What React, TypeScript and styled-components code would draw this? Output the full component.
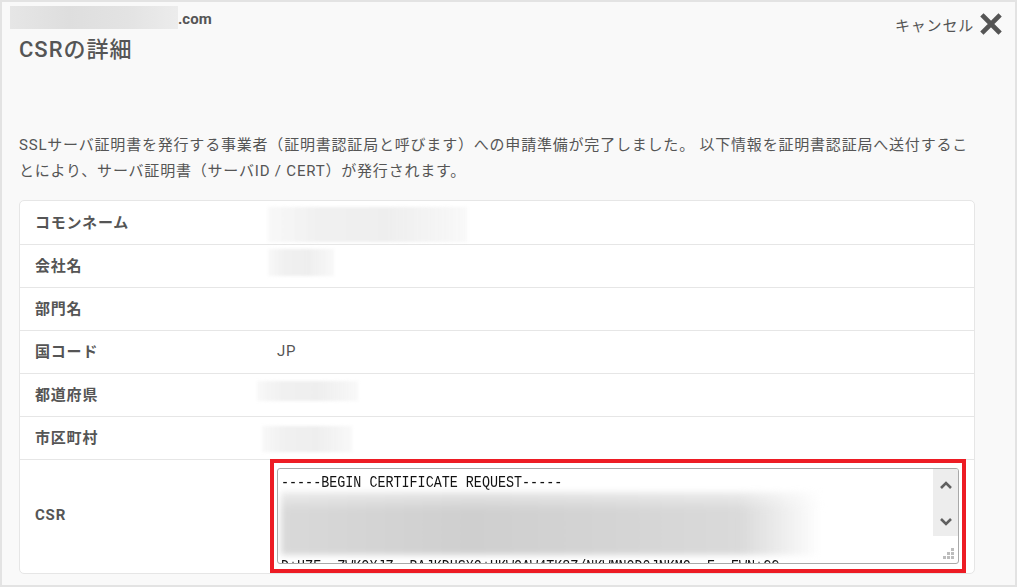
import React from "react";
import styled, { createGlobalStyle } from "styled-components";

const GlobalStyle = createGlobalStyle`
  body {
    margin: 0;
    background: #ffffff;
  }
`;

const Frame = styled.div`
  width: 1017px;
  height: 587px;
  box-sizing: border-box;
  border: 2px solid #e3e3e3;
  background: #f9f9f9;
  padding: 0 12px 0 17px;
  overflow: hidden;
  font-family: Roboto, "Noto Sans CJK JP", sans-serif;
  color: #555;
`;

const Header = styled.div`
  display: flex;
  justify-content: space-between;
  align-items: flex-start;
`;

const HeaderMain = styled.div`
  display: flex;
  flex-direction: column;
  padding-top: 4px;
`;

const DomainLine = styled.div`
  display: flex;
  align-items: flex-end;
  height: 23px;
  margin-left: -9px;
`;

const DomainMask = styled.div`
  width: 168px;
  height: 23px;
  background: linear-gradient(90deg, #e6e6e6, #dedede 35%, #e3e3e3 70%, #ececec);
`;

const DomainSuffix = styled.span`
  font-size: 15px;
  font-weight: 700;
  line-height: 19px;
`;

const Title = styled.h1`
  margin: 6px 0 0;
  font-size: 22px;
  font-weight: 500;
  line-height: 30px;
  letter-spacing: 1px;
  color: #555;
`;

const CancelButton = styled.button`
  display: flex;
  align-items: center;
  gap: 5px;
  margin-top: 10px;
  padding: 0;
  border: none;
  background: transparent;
  font-family: inherit;
  font-size: 15px;
  letter-spacing: 0.8px;
  color: #555;
  cursor: pointer;
`;

const Body = styled.div`
  margin-right: 28px;
`;

const Description = styled.p`
  margin: 67px 0 0;
  font-size: 15px;
  line-height: 26px;
  letter-spacing: 0.8px;
  white-space: nowrap;
`;

const Card = styled.div`
  margin-top: 16px;
  background: #fff;
  border: 1px solid #e6e6e6;
  border-radius: 5px;
`;

const Row = styled.div`
  display: grid;
  grid-template-columns: 250px 1fr;
  min-height: 42px;
  border-bottom: 1px solid #e6e6e6;

  &:last-child {
    border-bottom: none;
  }
`;

const Label = styled.div`
  display: flex;
  align-items: center;
  padding: 0 0 3px 15px;
  font-size: 15px;
  font-weight: 700;
  letter-spacing: 0.8px;
`;

const ValueCell = styled.div<{ $flush?: boolean }>`
  display: flex;
  align-items: ${({ $flush }) => ($flush ? "flex-start" : "center")};
  padding: 0 8px ${({ $flush }) => ($flush ? "0" : "2px")} 0;
  margin-top: ${({ $flush }) => ($flush ? "-1px" : "0")};
`;

const ValueText = styled.span`
  padding-left: 7px;
  font-size: 15px;
  letter-spacing: 0.6px;
`;

const Redacted = styled.div<{ $w: number; $h: number; $dx: number; $dy: number }>`
  align-self: flex-start;
  width: ${({ $w }) => $w}px;
  height: ${({ $h }) => $h}px;
  margin-left: ${({ $dx }) => $dx}px;
  margin-top: ${({ $dy }) => $dy}px;
  background: linear-gradient(90deg, rgba(238, 238, 238, 0.4), #f0f0f0 25%, #eeeeee 60%, rgba(244, 244, 244, 0.6));
  filter: blur(1.5px);
`;

const Highlight = styled.div`
  flex: 1;
  border: 4px solid #ed1c24;
  padding: 5px 3px;
`;

const CsrField = styled.div`
  position: relative;
  display: flex;
  height: 96px;
  box-sizing: border-box;
  border: 1px solid #a9a9a9;
  border-radius: 3px;
  background: #fff;
  overflow: hidden;
`;

const CsrText = styled.div`
  flex: 1;
  padding: 5px 0 0 3px;
  overflow: hidden;
  font-family: "Liberation Mono", monospace;
  font-size: 13.4px;
  line-height: 18px;
  color: #111;
  white-space: pre;
`;

const MonoLine = styled.div<{ $shift?: number }>`
  margin-top: ${({ $shift }) => $shift ?? 0}px;
  transform: scaleY(1.3);
  transform-origin: center;
`;

const CsrBlur = styled.div`
  width: 540px;
  height: 63px;
  background:
    linear-gradient(180deg, rgba(255, 255, 255, 0.5), rgba(255, 255, 255, 0) 30%),
    linear-gradient(90deg, #d9d9d9, #cfcfcf 35%, #d4d4d4 60%, #dadada 85%, rgba(255, 255, 255, 0));
  filter: blur(3px);
`;

const ScrollTrack = styled.div`
  display: flex;
  flex-direction: column;
  justify-content: space-between;
  align-items: center;
  width: 25px;
  height: 67px;
  box-sizing: border-box;
  padding: 11px 0 9px;
  background: #ededed;
`;

const Grip = styled.svg`
  position: absolute;
  right: 3px;
  bottom: 3px;
`;

const Chevron = ({ up }: { up?: boolean }) => (
  <svg width="14" height="10" viewBox="0 0 14 10">
    <path
      d={up ? "M2 8 L7 3 L12 8" : "M2 2 L7 7 L12 2"}
      fill="none"
      stroke="#606060"
      strokeWidth="2.6"
    />
  </svg>
);

const CloseIcon = () => (
  <svg width="24" height="24" viewBox="0 0 24 24">
    <path d="M4.5 4.5 L19.5 19.5 M19.5 4.5 L4.5 19.5" stroke="#555" strokeWidth="4.6" strokeLinecap="square" />
  </svg>
);

const rows = [
  { label: "コモンネーム", mask: { w: 199, h: 35, dx: -2, dy: 6 } },
  { label: "会社名", mask: { w: 66, h: 27, dx: -2, dy: 4 } },
  { label: "部門名" },
  { label: "国コード", value: "JP" },
  { label: "都道府県", mask: { w: 101, h: 20, dx: -13, dy: 7 } },
  { label: "市区町村", mask: { w: 90, h: 26, dx: -8, dy: 9 } },
];

const App: React.FC = () => {
  return (
    <>
      <GlobalStyle />
      <Frame>
        <Header>
          <HeaderMain>
            <DomainLine>
              <DomainMask />
              <DomainSuffix>.com</DomainSuffix>
            </DomainLine>
            <Title>CSRの詳細</Title>
          </HeaderMain>
          <CancelButton>
            キャンセル
            <CloseIcon />
          </CancelButton>
        </Header>
        <Body>
          <Description>
            SSLサーバ証明書を発行する事業者（証明書認証局と呼びます）への申請準備が完了しました。 以下情報を証明書認証局へ送付するこ
            <br />
            とにより、サーバ証明書（サーバID / CERT）が発行されます。
          </Description>
          <Card>
            {rows.map((r) => (
              <Row key={r.label}>
                <Label>{r.label}</Label>
                <ValueCell>
                  {r.value && <ValueText>{r.value}</ValueText>}
                  {r.mask && <Redacted $w={r.mask.w} $h={r.mask.h} $dx={r.mask.dx} $dy={r.mask.dy} />}
                </ValueCell>
              </Row>
            ))}
            <Row>
              <Label>CSR</Label>
              <ValueCell $flush>
                <Highlight>
                  <CsrField>
                    <CsrText>
                      <MonoLine>-----BEGIN CERTIFICATE REQUEST-----</MonoLine>
                      <CsrBlur />
                      <MonoLine $shift={3}>D+HZE  ZWKQXJZ  BAJKDHSXQ+UKWQAW4TK8Z/NKWMNOD0JNKMQ  E  EWN+CC</MonoLine>
                    </CsrText>
                    <ScrollTrack>
                      <Chevron up />
                      <Chevron />
                    </ScrollTrack>
                    <Grip width="12" height="12" viewBox="0 0 12 12">
                      <rect x="8" y="0" width="3" height="3" fill="#bdbdbd" />
                      <rect x="4" y="4" width="3" height="3" fill="#bdbdbd" />
                      <rect x="8" y="4" width="3" height="3" fill="#bdbdbd" />
                      <rect x="0" y="8" width="3" height="3" fill="#bdbdbd" />
                      <rect x="4" y="8" width="3" height="3" fill="#bdbdbd" />
                      <rect x="8" y="8" width="3" height="3" fill="#bdbdbd" />
                    </Grip>
                  </CsrField>
                </Highlight>
              </ValueCell>
            </Row>
          </Card>
        </Body>
      </Frame>
    </>
  );
};

export default App;
